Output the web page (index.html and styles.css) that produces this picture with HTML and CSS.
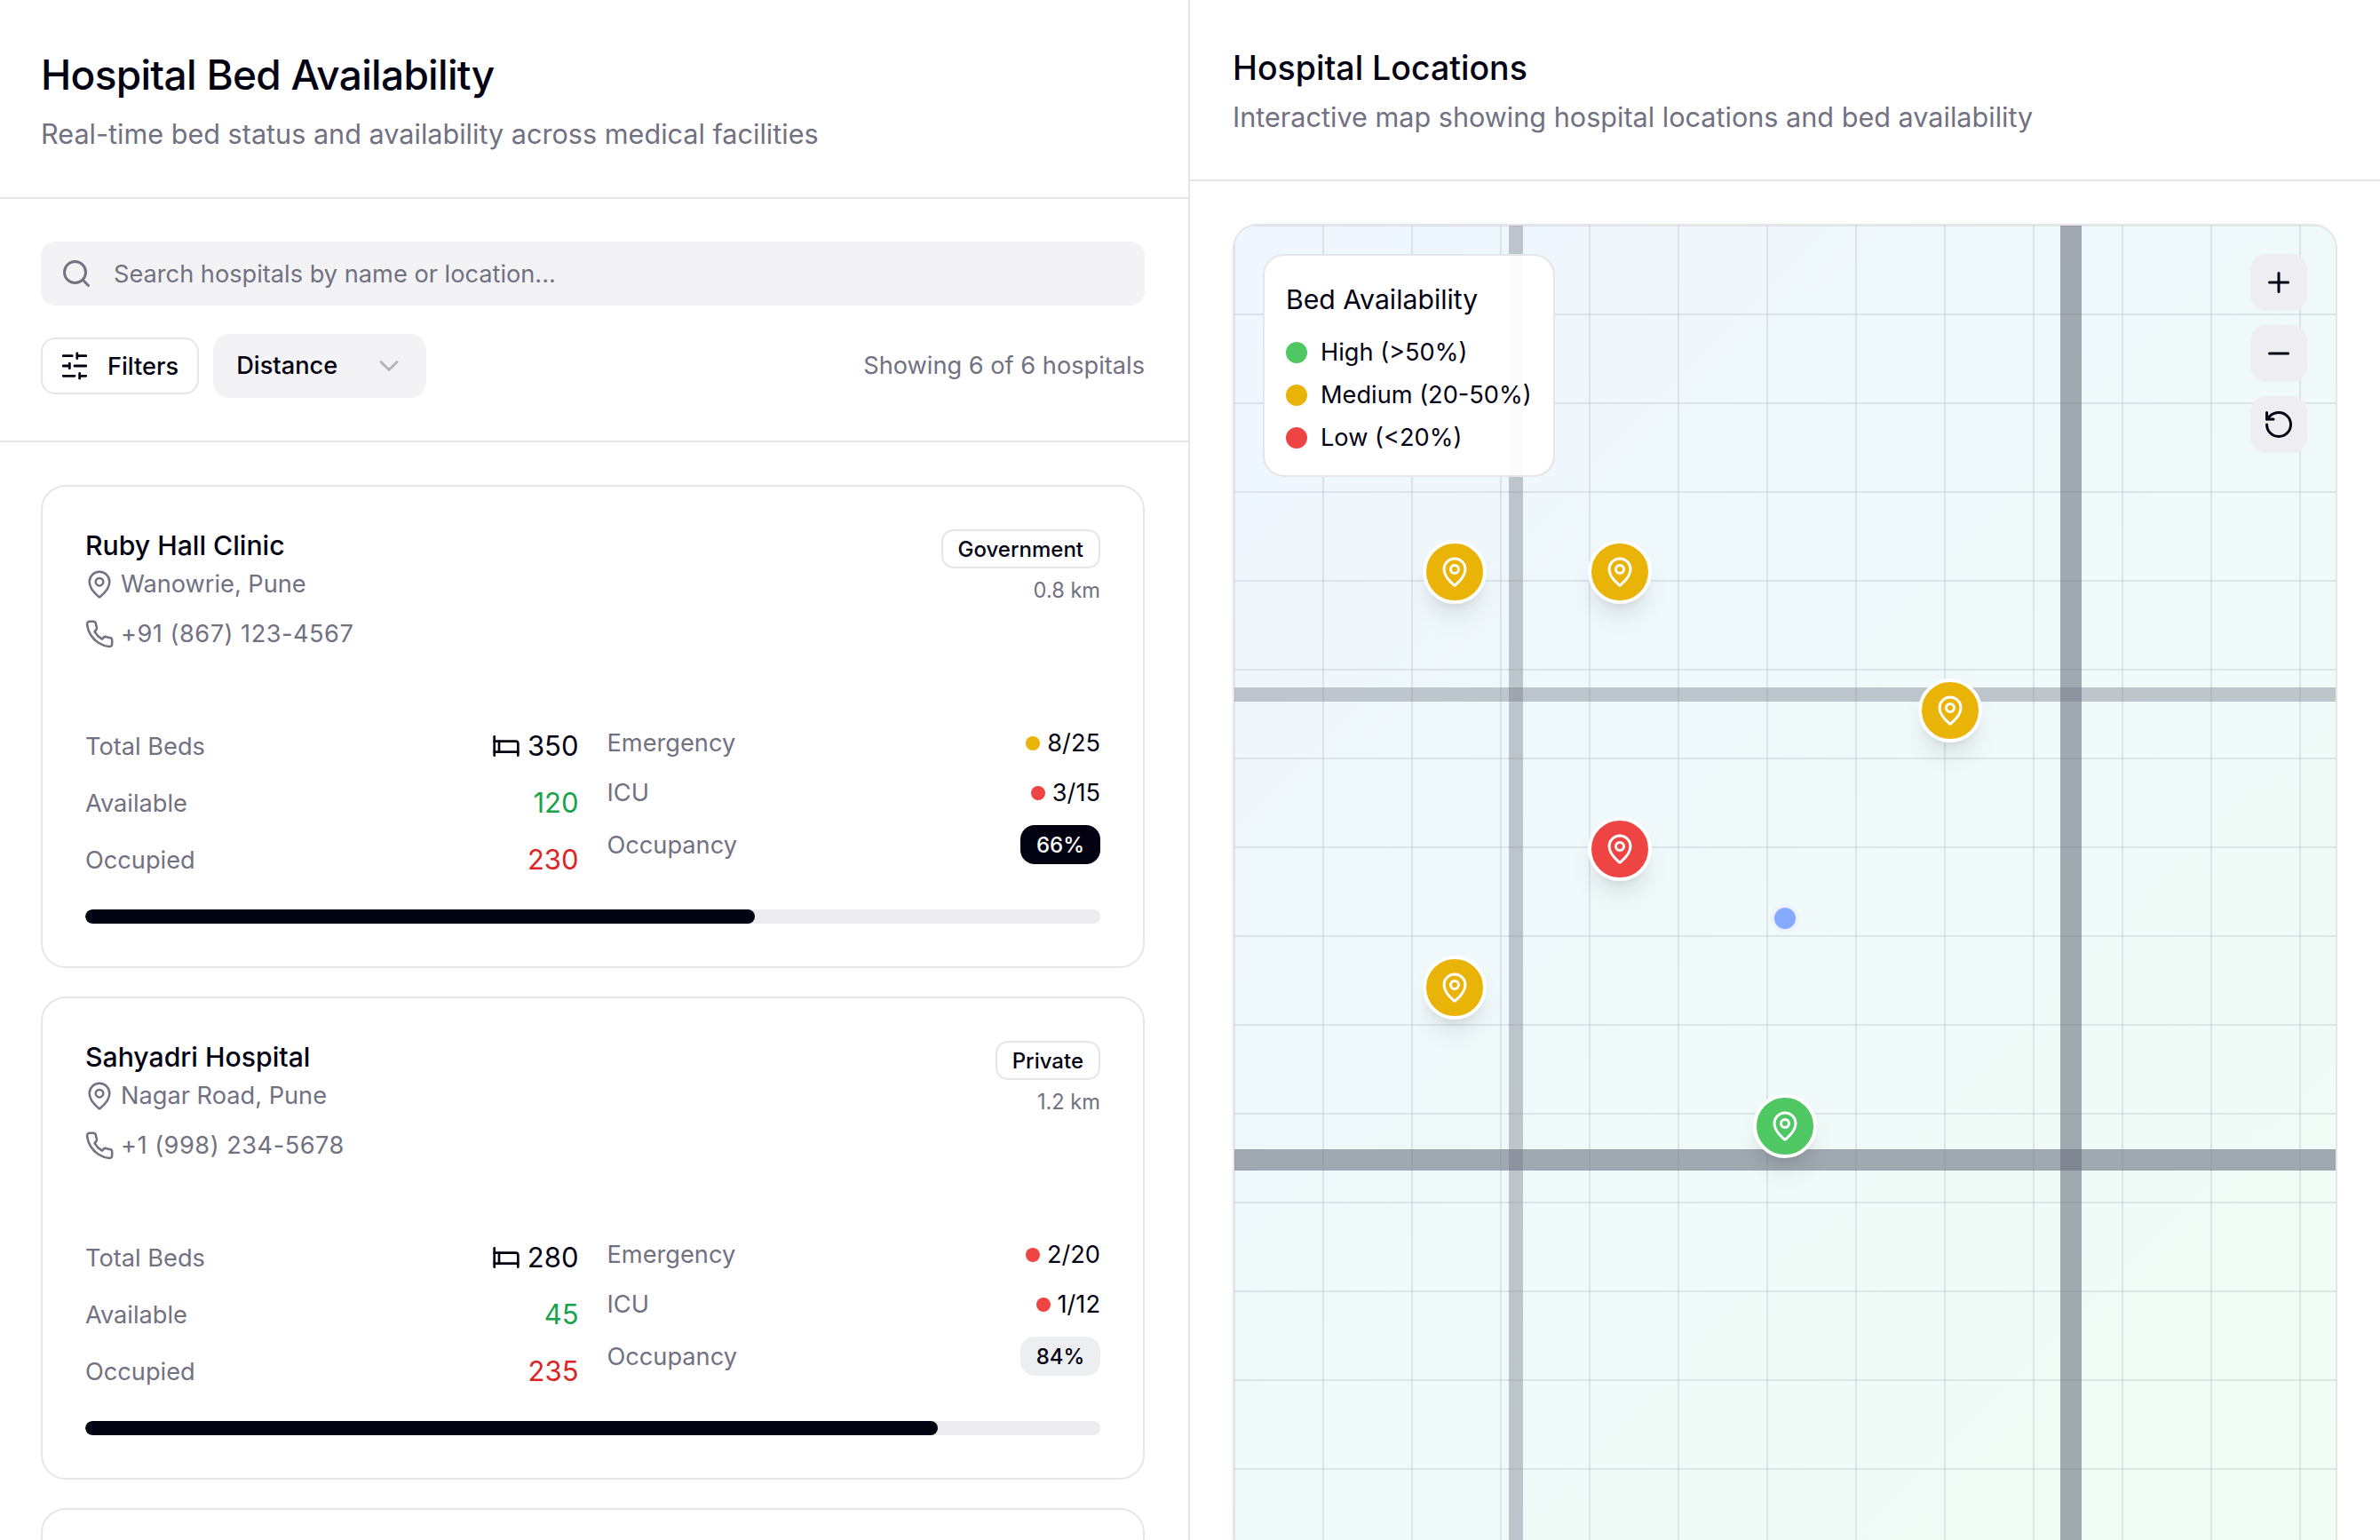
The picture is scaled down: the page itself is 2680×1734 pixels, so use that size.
FILE: index.html
```html
<!DOCTYPE html>
<html lang="en">
<head>
    <meta charset="UTF-8">
    <meta name="viewport" content="width=device-width, initial-scale=1.0">
    <title>Hospital Bed Availability</title>
    <link rel="stylesheet" href="styles.css">
</head>
<body>
    <svg class="icon-sprite" aria-hidden="true">
        <symbol id="i-pin" viewBox="0 0 24 24"><path d="M20 10c0 4.993-5.539 10.193-7.399 11.799a1 1 0 0 1-1.202 0C9.539 20.193 4 14.993 4 10a8 8 0 0 1 16 0"/><circle cx="12" cy="10" r="3"/></symbol>
        <symbol id="i-phone" viewBox="0 0 24 24"><path d="M22 16.92v3a2 2 0 0 1-2.18 2 19.79 19.79 0 0 1-8.63-3.07 19.5 19.5 0 0 1-6-6 19.79 19.79 0 0 1-3.07-8.67A2 2 0 0 1 4.11 2h3a2 2 0 0 1 2 1.72 12.84 12.84 0 0 0 .7 2.81 2 2 0 0 1-.45 2.11L8.09 9.91a16 16 0 0 0 6 6l1.27-1.27a2 2 0 0 1 2.11-.45 12.84 12.84 0 0 0 2.81.7A2 2 0 0 1 22 16.92z"/></symbol>
        <symbol id="i-bed" viewBox="0 0 24 24"><path d="M2 4v16"/><path d="M2 8h18a2 2 0 0 1 2 2v10"/><path d="M2 17h20"/><path d="M6 8v9"/></symbol>
    </svg>

    <div class="app">
        <section class="list-panel">
            <header class="list-head">
                <h1 class="list-title">Hospital Bed Availability</h1>
                <p class="list-sub">Real-time bed status and availability across medical facilities</p>
            </header>

            <div class="toolbar">
                <div class="search">
                    <svg class="icon search-icon" viewBox="0 0 24 24"><circle cx="11" cy="11" r="8"/><path d="m21 21-4.3-4.3"/></svg>
                    <span>Search hospitals by name or location...</span>
                </div>
                <div class="filter-row">
                    <button class="filter-btn">
                        <svg class="icon filter-icon" viewBox="0 0 24 24"><path d="M21 4h-7M10 4H3M21 12h-9M8 12H3M21 20h-5M12 20H3M14 2v4M8 10v4M16 18v4"/></svg>
                        Filters
                    </button>
                    <div class="sort-select">
                        <span>Distance</span>
                        <svg class="icon chevron" viewBox="0 0 24 24"><path d="m6 9 6 6 6-6"/></svg>
                    </div>
                    <span class="result-count">Showing 6 of 6 hospitals</span>
                </div>
            </div>

            <div class="cards">
                <article class="card">
                    <div class="card-top">
                        <div>
                            <h2 class="hospital-name">Ruby Hall Clinic</h2>
                            <div class="contact"><svg class="icon contact-icon"><use href="#i-pin"/></svg>Wanowrie, Pune</div>
                            <div class="contact phone"><svg class="icon contact-icon"><use href="#i-phone"/></svg>+91 (867) 123-4567</div>
                        </div>
                        <div class="card-meta">
                            <span class="type-badge">Government</span>
                            <span class="distance">0.8 km</span>
                        </div>
                    </div>
                    <div class="stats">
                        <div class="beds">
                            <div class="bed-row"><span class="label">Total Beds</span><span class="bed-num"><svg class="icon bed-icon"><use href="#i-bed"/></svg>350</span></div>
                            <div class="bed-row"><span class="label">Available</span><span class="bed-num green">120</span></div>
                            <div class="bed-row"><span class="label">Occupied</span><span class="bed-num red">230</span></div>
                        </div>
                        <div class="units">
                            <div class="unit-row"><span class="label">Emergency</span><span class="unit-num"><i class="dot dot-yellow"></i>8/25</span></div>
                            <div class="unit-row"><span class="label">ICU</span><span class="unit-num"><i class="dot dot-red"></i>3/15</span></div>
                            <div class="unit-row"><span class="label">Occupancy</span><span class="pct pct-dark">66%</span></div>
                        </div>
                    </div>
                    <div class="progress"><div class="progress-fill" style="width: 66%"></div></div>
                </article>

                <article class="card">
                    <div class="card-top">
                        <div>
                            <h2 class="hospital-name">Sahyadri Hospital</h2>
                            <div class="contact"><svg class="icon contact-icon"><use href="#i-pin"/></svg>Nagar Road, Pune</div>
                            <div class="contact phone"><svg class="icon contact-icon"><use href="#i-phone"/></svg>+1 (998) 234-5678</div>
                        </div>
                        <div class="card-meta">
                            <span class="type-badge">Private</span>
                            <span class="distance">1.2 km</span>
                        </div>
                    </div>
                    <div class="stats">
                        <div class="beds">
                            <div class="bed-row"><span class="label">Total Beds</span><span class="bed-num"><svg class="icon bed-icon"><use href="#i-bed"/></svg>280</span></div>
                            <div class="bed-row"><span class="label">Available</span><span class="bed-num green">45</span></div>
                            <div class="bed-row"><span class="label">Occupied</span><span class="bed-num red">235</span></div>
                        </div>
                        <div class="units">
                            <div class="unit-row"><span class="label">Emergency</span><span class="unit-num"><i class="dot dot-red"></i>2/20</span></div>
                            <div class="unit-row"><span class="label">ICU</span><span class="unit-num"><i class="dot dot-red"></i>1/12</span></div>
                            <div class="unit-row"><span class="label">Occupancy</span><span class="pct pct-light">84%</span></div>
                        </div>
                    </div>
                    <div class="progress"><div class="progress-fill" style="width: 84%"></div></div>
                </article>

                <article class="card card-next"></article>
            </div>
        </section>

        <section class="map-panel">
            <header class="map-head">
                <h2 class="map-title">Hospital Locations</h2>
                <p class="map-sub">Interactive map showing hospital locations and bed availability</p>
            </header>
            <div class="map-wrap">
                <div class="map">
                    <div class="road road-v road-thin" style="left: 25%"></div>
                    <div class="road road-v road-wide" style="left: 75%"></div>
                    <div class="road road-h road-thin" style="top: 33.33%"></div>
                    <div class="road road-h road-wide" style="top: 66.66%"></div>

                    <div class="marker marker-yellow" style="left: 20%; top: 25%"><svg class="icon marker-icon"><use href="#i-pin"/></svg></div>
                    <div class="marker marker-yellow" style="left: 35%; top: 25%"><svg class="icon marker-icon"><use href="#i-pin"/></svg></div>
                    <div class="marker marker-yellow" style="left: 65%; top: 35%"><svg class="icon marker-icon"><use href="#i-pin"/></svg></div>
                    <div class="marker marker-red" style="left: 35%; top: 45%"><svg class="icon marker-icon"><use href="#i-pin"/></svg></div>
                    <div class="marker marker-yellow" style="left: 20%; top: 55%"><svg class="icon marker-icon"><use href="#i-pin"/></svg></div>
                    <div class="marker marker-green" style="left: 50%; top: 65%"><svg class="icon marker-icon"><use href="#i-pin"/></svg></div>
                    <div class="me-dot" style="left: 50%; top: 50%"></div>

                    <div class="legend">
                        <h3 class="legend-title">Bed Availability</h3>
                        <div class="legend-row"><i class="legend-dot dot-green"></i>High (&gt;50%)</div>
                        <div class="legend-row"><i class="legend-dot dot-yellow"></i>Medium (20-50%)</div>
                        <div class="legend-row"><i class="legend-dot dot-red"></i>Low (&lt;20%)</div>
                    </div>

                    <div class="map-controls">
                        <button class="map-btn"><svg class="icon map-btn-icon" viewBox="0 0 24 24"><path d="M5 12h14M12 5v14"/></svg></button>
                        <button class="map-btn"><svg class="icon map-btn-icon" viewBox="0 0 24 24"><path d="M5 12h14"/></svg></button>
                        <button class="map-btn"><svg class="icon map-btn-icon" viewBox="0 0 24 24"><path d="M3 12a9 9 0 1 0 9-9 9.75 9.75 0 0 0-6.74 2.74L3 8"/><path d="M3 3v5h5"/></svg></button>
                    </div>
                </div>
            </div>
        </section>
    </div>
</body>
</html>
```

FILE: styles.css
```css
* {
    box-sizing: border-box;
}
html, body {
    margin: 0;
    height: 100%;
    overflow: hidden;
}
body {
    background-color: #fff;
    color: #030213;
    font-family: Inter, "Liberation Sans", sans-serif;
    font-size: 27.2px;
    line-height: 38px;
}
h1, h2, h3, p {
    margin: 0;
    font-weight: 500;
}
p {
    font-weight: 400;
}
.icon-sprite {
    display: none;
}
.icon {
    fill: none;
    stroke: currentColor;
    stroke-width: 2;
    stroke-linecap: round;
    stroke-linejoin: round;
    flex-shrink: 0;
}
.app {
    display: grid;
    grid-template-columns: 1340px 1340px;
    height: 1734px;
    overflow: hidden;
}

/* left panel */
.list-panel {
    border-right: 2px solid #e6e6e8;
    overflow: hidden;
}
.list-head {
    padding: 46px 46px 48px;
    border-bottom: 2px solid #e6e6e8;
}
.list-title {
    font-size: 46px;
    line-height: 76px;
    letter-spacing: -0.7px;
}
.list-sub {
    margin-top: 6px;
    font-size: 30.6px;
    line-height: 46px;
    color: #717182;
}
.toolbar {
    padding: 48px 49px 48px 46px;
    border-bottom: 2px solid #e6e6e8;
}
.search {
    display: flex;
    align-items: center;
    gap: 24px;
    height: 72px;
    padding: 2px 22px 0;
    background-color: #f3f3f5;
    border-radius: 16px;
    color: #717182;
}
.search-icon {
    width: 36px;
    height: 36px;
    margin-top: -2px;
}
.filter-row {
    display: flex;
    align-items: center;
    gap: 16px;
    margin-top: 32px;
}
.filter-btn {
    display: flex;
    align-items: center;
    gap: 20px;
    height: 64px;
    padding: 0 21px 0 19px;
    background-color: #fff;
    border: 2px solid #e6e6e8;
    border-radius: 16px;
    color: #030213;
    font: 500 27.2px Inter, sans-serif;
}
.filter-icon {
    width: 34px;
    height: 34px;
}
.sort-select {
    display: flex;
    align-items: center;
    justify-content: space-between;
    width: 240px;
    height: 72px;
    padding: 0 24px 0 26px;
    background-color: #f3f3f5;
    border-radius: 18px;
    font-weight: 500;
}
.chevron {
    width: 36px;
    height: 36px;
    color: #b4b4bd;
}
.result-count {
    margin-left: auto;
    color: #717182;
}
.cards {
    display: flex;
    flex-direction: column;
    gap: 32px;
    padding: 48px 49px 48px 46px;
}
.card {
    height: 544px;
    padding: 48px;
    border: 2px solid #e6e6e8;
    border-radius: 28px;
    flex-shrink: 0;
}
.card-top {
    display: flex;
    justify-content: space-between;
    align-items: flex-start;
    height: 221px;
}
.hospital-name {
    font-size: 30.2px;
    line-height: 36px;
}
.contact {
    display: flex;
    align-items: center;
    gap: 7px;
    height: 52px;
    margin-left: -1px;
    color: #717182;
}
.phone {
    margin-top: 4px;
    letter-spacing: 0.5px;
}
.contact-icon {
    width: 34px;
    height: 34px;
    stroke-width: 1.8;
}
.card-meta {
    display: flex;
    flex-direction: column;
    align-items: flex-end;
}
.type-badge {
    height: 44px;
    padding: 0 17px;
    border: 2px solid #e6e6e8;
    border-radius: 14px;
    font-size: 24px;
    font-weight: 500;
    line-height: 41px;
}
.distance {
    margin-top: 7px;
    color: #717182;
    font-size: 23.6px;
    line-height: 36px;
}
.stats {
    display: grid;
    grid-template-columns: 1fr 1fr;
    gap: 32px;
    height: 207px;
}
.bed-row {
    display: flex;
    justify-content: space-between;
    align-items: center;
    height: 46px;
    margin-bottom: 18px;
}
.label {
    color: #717182;
    padding-top: 1px;
}
.bed-num {
    display: flex;
    align-items: center;
    gap: 8px;
    font-size: 31px;
}
.bed-icon {
    width: 32px;
    height: 32px;
}
.green {
    color: #16a34a;
}
.red {
    color: #dc2626;
}
.unit-row {
    display: flex;
    justify-content: space-between;
    align-items: center;
    margin-bottom: 17px;
}
.unit-num {
    display: flex;
    align-items: center;
    gap: 8px;
}
.dot {
    width: 16px;
    height: 16px;
    border-radius: 50%;
}
.dot-green {
    background-color: #4fc763;
}
.dot-yellow {
    background-color: #eab308;
}
.dot-red {
    background-color: #ef4444;
}
.pct {
    width: 90px;
    height: 44px;
    border-radius: 16px;
    font-size: 24px;
    font-weight: 500;
    line-height: 45px;
    text-align: center;
}
.pct-dark {
    background-color: #030213;
    color: #fff;
}
.pct-light {
    background-color: #eceef2;
}
.progress {
    height: 16px;
    background-color: #ececf0;
    border-radius: 8px;
    overflow: hidden;
}
.progress-fill {
    height: 100%;
    background-color: #030213;
    border-radius: 8px;
}

/* right panel */
.map-panel {
    overflow: hidden;
}
.map-head {
    padding: 46px 48px 48px;
    border-bottom: 2px solid #e6e6e8;
}
.map-title {
    font-size: 37.5px;
    line-height: 62px;
}
.map-sub {
    margin-top: 1px;
    font-size: 30.6px;
    line-height: 45px;
    color: #717182;
}
.map-wrap {
    padding: 48px;
}
.map {
    position: relative;
    height: 1564px;
    border: 2px solid #e6e6e8;
    border-radius: 28px;
    overflow: hidden;
    background-color: #f0f8f8;
    background-image:
        linear-gradient(rgba(156, 163, 175, 0.24) 2px, transparent 2px),
        linear-gradient(90deg, rgba(156, 163, 175, 0.24) 2px, transparent 2px),
        linear-gradient(135deg, #eff6ff, #f0fdf4);
    background-size: 100px 100px, 100px 100px, 100% 100%;
    background-position: -1px -1px, -1px -1px, 0 0;
}
.road {
    position: absolute;
}
.road-v {
    top: 0;
    bottom: 0;
}
.road-h {
    left: 0;
    right: 0;
}
.road-v.road-thin {
    width: 16px;
    margin-left: -1px;
}
.road-v.road-wide {
    width: 24px;
}
.road-h.road-thin {
    height: 16px;
}
.road-h.road-wide {
    height: 24px;
}
.road-thin {
    background-color: rgba(107, 114, 128, 0.38);
}
.road-wide {
    background-color: rgba(107, 114, 128, 0.6);
}
.marker {
    position: absolute;
    display: flex;
    align-items: center;
    justify-content: center;
    width: 72px;
    height: 72px;
    border: 4px solid #fff;
    border-radius: 50%;
    color: #fff;
    transform: translate(-50%, -50%);
    box-shadow: 0 19px 29px -6px rgba(0, 0, 0, 0.1), 0 8px 12px -8px rgba(0, 0, 0, 0.1);
}
.marker-icon {
    width: 36px;
    height: 36px;
}
.marker-yellow {
    background-color: #eab308;
}
.marker-red {
    background-color: #ef4444;
}
.marker-green {
    background-color: #4fc763;
}
.me-dot {
    position: absolute;
    width: 32px;
    height: 32px;
    background-color: #86aaff;
    border: 4px solid rgba(255, 255, 255, 0.85);
    border-radius: 50%;
    transform: translate(-50%, -50%);
}
.legend {
    position: absolute;
    top: 32px;
    left: 32px;
    padding: 24px 24px 23px;
    background-color: rgba(255, 255, 255, 0.95);
    border: 2px solid #e6e6e8;
    border-radius: 24px;
}
.legend-title {
    margin-bottom: 16px;
    font-size: 30.2px;
    font-weight: 400;
    line-height: 50px;
}
.legend-row {
    display: flex;
    align-items: center;
    gap: 15px;
    margin-bottom: 10px;
    white-space: nowrap;
}
.legend-row:last-child {
    margin-bottom: 0;
}
.legend-dot {
    width: 24px;
    height: 24px;
    border-radius: 50%;
}
.map-controls {
    position: absolute;
    top: 32px;
    right: 32px;
    display: flex;
    flex-direction: column;
    gap: 16px;
}
.map-btn {
    display: flex;
    align-items: center;
    justify-content: center;
    width: 64px;
    height: 64px;
    padding: 0;
    background-color: #eeeef2;
    border: none;
    border-radius: 18px;
    color: #030213;
}
.map-btn-icon {
    width: 36px;
    height: 36px;
}
```
